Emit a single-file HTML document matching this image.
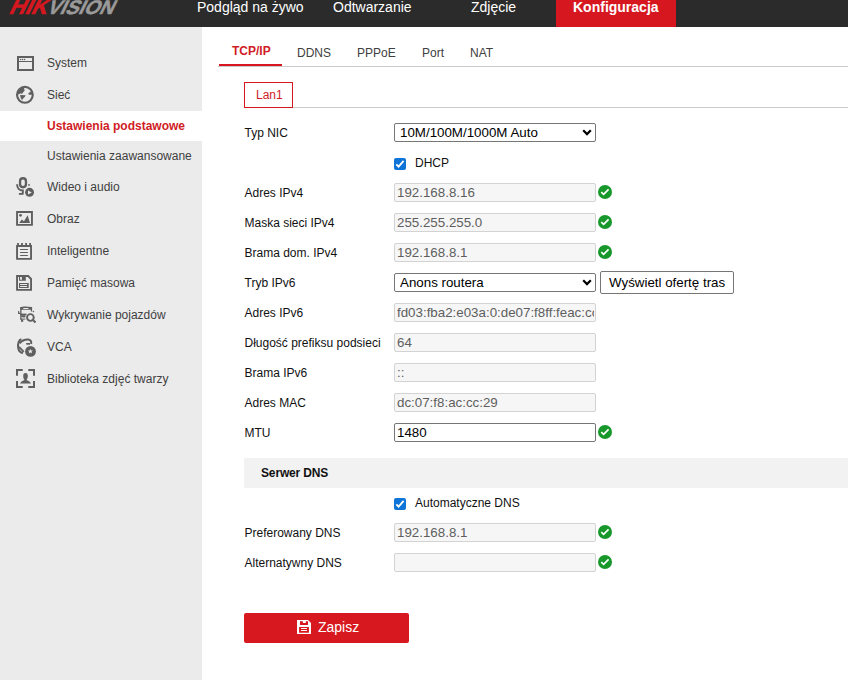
<!DOCTYPE html>
<html>
<head>
<meta charset="utf-8">
<style>
*{box-sizing:border-box;margin:0;padding:0}
html,body{width:848px;height:680px;overflow:hidden;background:#fff;font-family:"Liberation Sans",sans-serif;position:relative}
.a{position:absolute;white-space:nowrap}
#hdr{position:absolute;left:0;top:0;width:848px;height:27px;background:#2b2b2b;overflow:hidden}
#logo{position:absolute;left:8px;top:-4px;font:bold 22px/22px "Liberation Sans",sans-serif;transform:skewX(-26deg);transform-origin:0 18px;white-space:nowrap;-webkit-text-stroke:0.5px currentColor}
#logo .r{color:#d7171f;-webkit-text-stroke:0.6px #d7171f}
#logo .g{color:#9a9a9a;-webkit-text-stroke:0.5px #9a9a9a}
.nav{position:absolute;top:0px;color:#fff;font-size:14px;line-height:14px;white-space:nowrap}
#konf{position:absolute;left:556px;top:0;width:120px;height:27px;background:#d7171f;}
#side{position:absolute;left:0;top:27px;width:202px;height:653px;background:#ebebeb;}
.st{position:absolute;left:47px;font-size:12px;line-height:12px;color:#404040;white-space:nowrap}
.ic{position:absolute;left:0;top:0}
.lbl{position:absolute;left:244.5px;font-size:12px;line-height:12px;color:#111;white-space:nowrap}
.inp{position:absolute;left:394px;width:202px;height:19px;border:1px solid #d3d3d3;border-radius:2px;background:#f6f6f6;font-size:13.33px;color:#5e5e5e;padding-left:2px;line-height:17px;white-space:nowrap;overflow:hidden}
.inp.en{background:#fff;border:1px solid #767676;color:#000}
.sel{position:absolute;left:394px;width:202px;height:19px;border:1px solid #767676;border-radius:2px;background:#fff;font-size:13.33px;color:#000;padding-left:5px;line-height:17px;white-space:nowrap}
.sel svg{position:absolute;right:3px;top:5px}
.ok{position:absolute;left:598px}
.cb{position:absolute;left:394px}
</style>
</head>
<body>
<div id="hdr">
  <div id="logo"><span class="r">HIK</span><span class="g" style="font-size:19.6px;letter-spacing:0px">VISION</span></div>
  <div class="nav" style="left:197px">Podgląd na żywo</div>
  <div class="nav" style="left:333px">Odtwarzanie</div>
  <div class="nav" style="left:471px">Zdjęcie</div>
  <div id="konf"></div>
  <div class="nav" style="left:573px;font-weight:bold">Konfiguracja</div>
</div>

<div id="side"></div>
<div class="a" style="left:0;top:111px;width:202px;height:30px;background:#fff"></div>

<div class="st" style="top:57px">System</div>
<div class="st" style="top:89px">Sieć</div>
<div class="st" style="top:120px;color:#d01c25;font-weight:bold">Ustawienia podstawowe</div>
<div class="st" style="top:150px">Ustawienia zaawansowane</div>
<div class="st" style="top:181px">Wideo i audio</div>
<div class="st" style="top:213px">Obraz</div>
<div class="st" style="top:245px">Inteligentne</div>
<div class="st" style="top:277px">Pamięć masowa</div>
<div class="st" style="top:309px">Wykrywanie pojazdów</div>
<div class="st" style="top:341px">VCA</div>
<div class="st" style="top:373px">Biblioteka zdjęć twarzy</div>

<!-- tabs -->
<div class="a" style="left:218px;top:66px;width:630px;height:1px;background:#cccccc"></div>
<div class="a" style="left:219px;top:64px;width:63px;height:2px;background:#d7171f"></div>
<div class="a" style="left:232px;top:45px;font-size:12px;line-height:12px;color:#d01c25;font-weight:bold">TCP/IP</div>
<div class="a" style="left:297px;top:47px;font-size:12px;line-height:12px;color:#404040">DDNS</div>
<div class="a" style="left:357px;top:47px;font-size:12px;line-height:12px;color:#404040">PPPoE</div>
<div class="a" style="left:422px;top:47px;font-size:12px;line-height:12px;color:#404040">Port</div>
<div class="a" style="left:470px;top:47px;font-size:12px;line-height:12px;color:#404040">NAT</div>

<!-- lan1 -->
<div class="a" style="left:244px;top:107px;width:604px;height:1px;background:#cccccc"></div>
<div class="a" style="left:244px;top:82px;width:49px;height:26px;border:1px solid #d7171f;background:#fff"></div>
<div class="a" style="left:256px;top:89px;font-size:12px;line-height:12px;color:#d01c25">Lan1</div>

<!-- form -->
<div class="lbl" style="top:127px">Typ NIC</div>
<div class="sel" style="top:123px">10M/100M/1000M Auto<svg width="10" height="7" viewBox="0 0 10 7"><path d="M1.2 1.3 L5 5.1 L8.8 1.3" fill="none" stroke="#000" stroke-width="2.2"/></svg></div>

<svg class="cb" style="top:158px" width="12" height="12" viewBox="0 0 12 12"><rect x="0" y="0" width="12" height="12" rx="2" fill="#0f74d8"/><path d="M2.3 6.3 L4.6 8.6 L9.6 2.9" fill="none" stroke="#fff" stroke-width="1.8"/></svg>
<div class="a" style="left:415px;top:157px;font-size:12px;line-height:12px;color:#111">DHCP</div>

<div class="lbl" style="top:187px">Adres IPv4</div>
<div class="inp" style="top:183px">192.168.8.16</div>
<div class="lbl" style="top:217px">Maska sieci IPv4</div>
<div class="inp" style="top:213px">255.255.255.0</div>
<div class="lbl" style="top:247px">Brama dom. IPv4</div>
<div class="inp" style="top:243px">192.168.8.1</div>

<div class="lbl" style="top:277px">Tryb IPv6</div>
<div class="sel" style="top:273px">Anons routera<svg width="10" height="7" viewBox="0 0 10 7"><path d="M1.2 1.3 L5 5.1 L8.8 1.3" fill="none" stroke="#000" stroke-width="2.2"/></svg></div>
<div class="a" style="left:600px;top:271px;width:134px;height:23px;border:1px solid #767676;border-radius:2px;background:#fff;font-size:13.33px;line-height:21px;color:#000;padding-left:8px">Wyświetl ofertę tras</div>

<div class="lbl" style="top:307px">Adres IPv6</div>
<div class="inp" style="top:303px"><span style="display:block;overflow:hidden;width:197px">fd03:fba2:e03a:0:de07:f8ff:feac:cc29</span></div>
<div class="lbl" style="top:337px">Długość prefiksu podsieci</div>
<div class="inp" style="top:333px">64</div>
<div class="lbl" style="top:367px">Brama IPv6</div>
<div class="inp" style="top:363px">::</div>
<div class="lbl" style="top:397px">Adres MAC</div>
<div class="inp" style="top:393px">dc:07:f8:ac:cc:29</div>
<div class="lbl" style="top:427px">MTU</div>
<div class="inp en" style="top:423px">1480</div>

<div class="a" style="left:244px;top:458px;width:604px;height:30px;background:#f2f2f2"></div>
<div class="a" style="left:261px;top:467px;font-size:12px;line-height:12px;color:#111;font-weight:bold;letter-spacing:-0.15px">Serwer DNS</div>

<svg class="cb" style="top:498px" width="12" height="12" viewBox="0 0 12 12"><rect x="0" y="0" width="12" height="12" rx="2" fill="#0f74d8"/><path d="M2.3 6.3 L4.6 8.6 L9.6 2.9" fill="none" stroke="#fff" stroke-width="1.8"/></svg>
<div class="a" style="left:415px;top:497px;font-size:12px;line-height:12px;color:#111">Automatyczne DNS</div>

<div class="lbl" style="top:527px">Preferowany DNS</div>
<div class="inp" style="top:523px">192.168.8.1</div>
<div class="lbl" style="top:557px">Alternatywny DNS</div>
<div class="inp" style="top:553px"></div>

<!-- ok icons -->
<svg class="ok" style="top:185px" width="14" height="14" viewBox="0 0 14 14"><circle cx="7" cy="7" r="7" fill="#18982b"/><path d="M3.3 7.2 L5.6 9.4 L10.6 4.4" fill="none" stroke="#fff" stroke-width="1.7"/></svg>
<svg class="ok" style="top:215px" width="14" height="14" viewBox="0 0 14 14"><circle cx="7" cy="7" r="7" fill="#18982b"/><path d="M3.3 7.2 L5.6 9.4 L10.6 4.4" fill="none" stroke="#fff" stroke-width="1.7"/></svg>
<svg class="ok" style="top:245px" width="14" height="14" viewBox="0 0 14 14"><circle cx="7" cy="7" r="7" fill="#18982b"/><path d="M3.3 7.2 L5.6 9.4 L10.6 4.4" fill="none" stroke="#fff" stroke-width="1.7"/></svg>
<svg class="ok" style="top:425px" width="14" height="14" viewBox="0 0 14 14"><circle cx="7" cy="7" r="7" fill="#18982b"/><path d="M3.3 7.2 L5.6 9.4 L10.6 4.4" fill="none" stroke="#fff" stroke-width="1.7"/></svg>
<svg class="ok" style="top:525px" width="14" height="14" viewBox="0 0 14 14"><circle cx="7" cy="7" r="7" fill="#18982b"/><path d="M3.3 7.2 L5.6 9.4 L10.6 4.4" fill="none" stroke="#fff" stroke-width="1.7"/></svg>
<svg class="ok" style="top:555px" width="14" height="14" viewBox="0 0 14 14"><circle cx="7" cy="7" r="7" fill="#18982b"/><path d="M3.3 7.2 L5.6 9.4 L10.6 4.4" fill="none" stroke="#fff" stroke-width="1.7"/></svg>

<!-- save -->
<div class="a" style="left:244px;top:613px;width:165px;height:30px;background:#d7191f;border-radius:2px"></div>
<svg class="a" style="left:297px;top:620px" width="14" height="14" viewBox="0 0 14 14"><path d="M0 0 H11 L14 3 V14 H0 Z" fill="#fff"/><path fill-rule="evenodd" d="M3 1.2 H11 V5 H3 Z M5.9 1.2 V2.9 H8.8 V1.2 Z" fill="#d7191f"/><path fill-rule="evenodd" d="M2.1 7 H11.9 V12.8 H2.1 Z M4.1 8 V9 H9.9 V8 Z M4.1 10 V11 H9.9 V10 Z" fill="#d7191f"/></svg>
<div class="a" style="left:318px;top:620px;font-size:14px;line-height:14px;color:#fff">Zapisz</div>

<!-- sidebar icons -->
<svg class="ic" width="202" height="400" viewBox="0 0 202 400" fill="#5f5f5f">
 <!-- system -->
 <path fill-rule="evenodd" d="M17 56 H34 V71 H17 Z M19 58 V69 H32 V58 Z"/>
 <rect x="19" y="61" width="13" height="1"/>
 <circle cx="20.6" cy="59.6" r="0.75"/><circle cx="22.6" cy="59.6" r="0.75"/><circle cx="24.6" cy="59.6" r="0.75"/>
 <!-- globe -->
 <circle cx="24.9" cy="94.8" r="7.9" fill="none" stroke="#5f5f5f" stroke-width="2.1"/>
 <path d="M17.5 91 C18.5 88.5 21 87 23.7 87.3 L24.7 90.5 L23.4 92.1 L22.1 93.7 L20.1 93.4 L18.2 94.7 Z"/>
 <path d="M20.1 95 L25.7 95.3 L24.7 96.9 L23.1 98.6 L22.1 100.2 L20.5 97.6 Z"/>
 <path d="M30.8 91.4 L28.2 93.4 L28.9 94.7 L32.5 94.7 L32.8 92 Z"/>
 <!-- mic -->
 <rect x="20.05" y="178.25" width="5.9" height="9" rx="2.95" fill="none" stroke="#5f5f5f" stroke-width="2.3"/>
 <path d="M17.1 184.2 C17.1 188 19.5 190.5 22.8 190.5 V193.6" fill="none" stroke="#5f5f5f" stroke-width="2"/>
 <rect x="18.9" y="193" width="4.6" height="1.8"/>
 <circle cx="29" cy="184.9" r="0.95"/>
 <circle cx="29.55" cy="192.3" r="4.45"/>
 <path d="M28 190.4 L31.8 192.4 L28 194.4 Z" fill="#ebebeb"/>
 <!-- obraz -->
 <path fill-rule="evenodd" d="M16.1 211.1 H32.9 V225.8 H16.1 Z M18 213 V223.9 H31 V213 Z"/>
 <circle cx="20.5" cy="215.3" r="1.4"/>
 <path d="M19.2 222.9 L21.8 219.4 L24 221.3 L27.6 215.2 L30 222.9 Z"/>
 <!-- inteligentne -->
 <path fill-rule="evenodd" d="M16.1 245 H32 V259.7 H16.1 Z M18 246.9 V257.9 H30.1 V246.9 Z"/>
 <rect x="17.1" y="243" width="1.8" height="2.2"/><rect x="21.1" y="243" width="1.8" height="2.2"/><rect x="25.2" y="243" width="1.8" height="2.2"/><rect x="29.2" y="243" width="1.8" height="2.2"/>
 <rect x="20.1" y="249" width="7.8" height="1"/><rect x="20.1" y="252" width="7.8" height="1"/><rect x="20.1" y="255" width="7.8" height="1"/>
 <!-- floppy -->
 <path fill-rule="evenodd" d="M16.1 275.1 H28.6 L32 278.6 V290.8 H16.1 Z M18 277 V288.9 H30.1 V279.5 L27.8 277 Z"/>
 <path d="M19 276 H25.8 V280.7 H19 Z M20.1 277 V279.8 H21.9 V277 Z" fill-rule="evenodd"/>
 <path fill-rule="evenodd" d="M19 283 H28.7 V287.9 H19 Z M20.1 284 V285 H27.1 V284 Z M20.1 286 V287 H27.1 V286 Z"/>
 <!-- vehicle -->
 <path d="M20.2 309.8 V307.5 C22 306.4 26 306.1 31.6 307 V309.8 Z"/>
 <rect x="23.2" y="308" width="5.3" height="1.1" rx="0.5" fill="#ebebeb"/>
 <rect x="20.2" y="307.3" width="1.3" height="12.3"/>
 <rect x="30.8" y="307" width="1.3" height="4.5"/>
 <rect x="20.2" y="313.6" width="6.3" height="1.8"/>
 <path d="M21.2 315.3 H25.2 L25.6 317 C24 317.8 22.5 317.5 21.4 317 Z" fill="#5f5f5f"/>
 <rect x="20.2" y="318.6" width="5.2" height="1"/>
 <rect x="21" y="319.4" width="2.2" height="2.4"/>
 <path d="M18.6 311 V313.4 H20.3" fill="none" stroke="#5f5f5f" stroke-width="1.1"/>
 <circle cx="33.4" cy="311.5" r="0.8"/>
 <circle cx="30.4" cy="317.5" r="3.35" fill="none" stroke="#5f5f5f" stroke-width="1.9"/>
 <path d="M33.2 320.3 L35.5 322.5" stroke="#5f5f5f" stroke-width="2.1" fill="none"/>
 <!-- vca -->
 <path d="M21.4 339.2 C18.8 339.6 17.6 343.8 18.2 348 C18.7 350.6 20.2 352.6 23 352.9" fill="none" stroke="#5f5f5f" stroke-width="2"/>
 <path d="M19.6 343.4 C21.6 340.8 25.2 339.4 28 339.5 C30.4 339.7 31.8 341.4 31.1 344" fill="none" stroke="#5f5f5f" stroke-width="2"/>
 <path d="M19 346.9 L23.8 351.8" fill="none" stroke="#5f5f5f" stroke-width="1.8"/>
 <path d="M26 343.1 H30 V344.8 H26.6 Z"/>
 <circle cx="30.5" cy="351.4" r="5.4"/>
 <path d="M30.4 348.9 L31.1 350.5 L32.9 350.6 L31.5 351.7 L32 353.5 L30.4 352.5 L28.8 353.5 L29.3 351.7 L27.9 350.6 L29.7 350.5 Z" fill="#ebebeb"/>
 <!-- face library -->
 <path d="M17 375.8 V370 H22.7 M28.3 370 H34 V375.8 M34 381 V387 H28.3 M22.7 387 H17 V381" fill="none" stroke="#5f5f5f" stroke-width="2"/>
 <path d="M25.5 373 C23.8 373 23.2 374.3 23.2 376 C23.2 378 24 379.5 24.6 380 C22 380.8 20.8 382 20 383.6 H31 C30.2 382 29 380.8 26.4 380 C27 379.5 27.8 378 27.8 376 C27.8 374.3 27.2 373 25.5 373 Z"/>
</svg>
</body>
</html>
